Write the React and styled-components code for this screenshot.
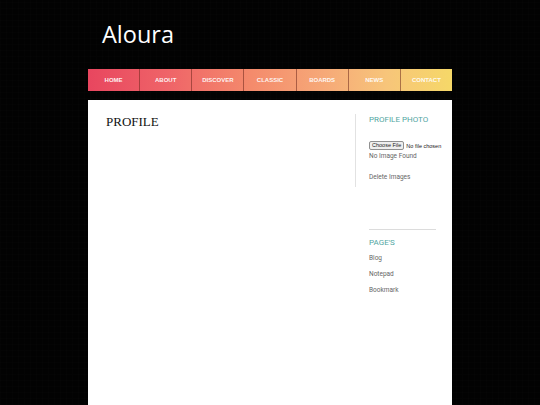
import React from "react";
import styled, { createGlobalStyle } from "styled-components";

const Global = createGlobalStyle`
  html, body { margin: 0; padding: 0; }
  body {
    background-color: #020202;
    background-image:
      repeating-linear-gradient(90deg, rgba(255,255,255,0.008) 0 1px, transparent 1px 6px),
      repeating-linear-gradient(0deg, rgba(255,255,255,0.007) 0 1px, transparent 1px 6px);
    min-height: 405px;
    overflow: hidden;
  }
`;

const Wrapper = styled.div`
  width: 364px;
  margin: 0 auto;
`;

const Header = styled.header`
  height: 69px;
  display: flex;
  align-items: center;
  padding-left: 14px;
  box-sizing: border-box;
`;

const SiteTitle = styled.h1`
  margin: 0;
  font-family: "Open Sans", "Noto Sans", sans-serif;
  font-weight: 400;
  font-size: 23.5px;
  color: #fff;
  line-height: 1;
`;

const Nav = styled.nav`
  height: 22px;
  display: flex;
  background: linear-gradient(90deg, #e8465f 0%, #ef6468 22%, #f48b6c 45%, #f6a978 65%, #f7c57a 82%, #f6d868 100%);
  margin-bottom: 9px;
`;

const NavItem = styled.a`
  flex: 1;
  display: flex;
  align-items: center;
  justify-content: center;
  font-family: "Liberation Sans", Arial, sans-serif;
  font-weight: 700;
  font-size: 6px;
  color: rgba(255, 255, 255, 0.92);
  text-decoration: none;
  border-left: ${(p) => (p.$first ? "none" : "1px solid rgba(110, 40, 30, 0.55)")};
`;

const Panel = styled.div`
  background: #fff;
  display: flex;
  min-height: 305px;
`;

const Main = styled.main`
  flex: 1;
  padding: 14px 18px;
`;

const PageTitle = styled.h2`
  margin: 0;
  font-family: "Liberation Serif", "Times New Roman", serif;
  font-weight: 400;
  font-size: 13px;
  color: #111;
  line-height: 15px;
`;

const Sidebar = styled.aside`
  width: 97px;
  padding-top: 14px;
  box-sizing: border-box;
`;

const Widget = styled.section`
  padding-left: 13px;
  border-left: ${(p) => (p.$bordered ? "1px solid #e2e2e2" : "none")};
  margin-left: ${(p) => (p.$bordered ? "0" : "1px")};
  height: ${(p) => p.$h || "auto"};
  box-sizing: border-box;
`;

const WidgetTitle = styled.h3`
  margin: 0;
  font-family: "Roboto", "Noto Sans", sans-serif;
  font-weight: 400;
  font-size: 8px;
  color: #52a6a2;
  line-height: 12px;
  padding-top: ${(p) => p.$pt || "0"};
`;

const FileRow = styled.div`
  display: flex;
  align-items: center;
  margin-top: 15px;
  white-space: nowrap;
`;

const FileButton = styled.button`
  font-family: "Liberation Sans", Arial, sans-serif;
  font-size: 5.5px;
  padding: 0 2px;
  height: 9px;
  line-height: 7px;
  border: 1px solid #909090;
  border-radius: 2px;
  background: #efefef;
  color: #222;
  margin: 0 2px 0 0;
`;

const FileText = styled.span`
  font-family: "Liberation Sans", Arial, sans-serif;
  font-size: 5.5px;
  color: #222;
`;

const SmallText = styled.div`
  font-family: "Roboto", "Noto Sans", sans-serif;
  font-size: 6.5px;
  color: #666;
  line-height: 9px;
  margin-top: ${(p) => p.$mt || "0"};
`;

const Rule = styled.hr`
  border: none;
  border-top: 1px solid #dcdcdc;
  margin: 42px 0 0 0;
  width: 67px;
`;

const PageLink = styled.a`
  display: block;
  font-family: "Roboto", "Noto Sans", sans-serif;
  font-size: 6.5px;
  color: #666;
  text-decoration: none;
  line-height: 9px;
  margin-top: ${(p) => p.$mt || "7px"};
`;

const navItems = ["HOME", "ABOUT", "DISCOVER", "CLASSIC", "BOARDS", "NEWS", "CONTACT"];

export default function App() {
  return (
    <>
      <Global />
      <Wrapper>
        <Header>
          <SiteTitle>Aloura</SiteTitle>
        </Header>
        <Nav>
          {navItems.map((n, i) => (
            <NavItem key={n} $first={i === 0} href="#">
              {n}
            </NavItem>
          ))}
        </Nav>
        <Panel>
          <Main>
            <PageTitle>PROFILE</PageTitle>
          </Main>
          <Sidebar>
            <Widget $bordered $h="73px">
              <WidgetTitle>PROFILE PHOTO</WidgetTitle>
              <FileRow>
                <FileButton>Choose File</FileButton>
                <FileText>No file chosen</FileText>
              </FileRow>
              <SmallText $mt="2px">No Image Found</SmallText>
              <SmallText $mt="12px">Delete Images</SmallText>
            </Widget>
            <Widget>
              <Rule />
              <WidgetTitle $pt="7px">PAGE'S</WidgetTitle>
              <PageLink $mt="5px">Blog</PageLink>
              <PageLink>Notepad</PageLink>
              <PageLink>Bookmark</PageLink>
            </Widget>
          </Sidebar>
        </Panel>
      </Wrapper>
    </>
  );
}
